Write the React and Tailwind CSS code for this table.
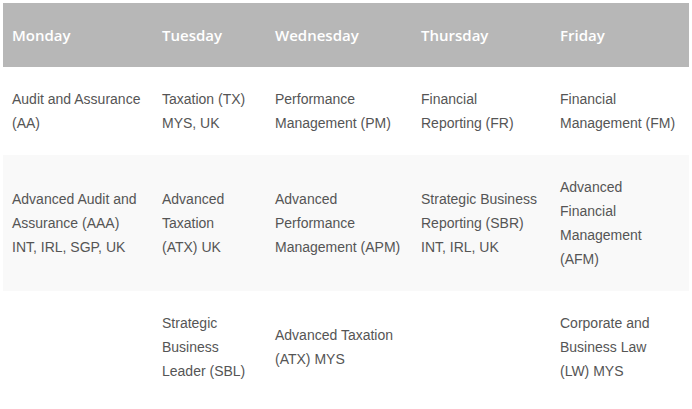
const days = ["Monday", "Tuesday", "Wednesday", "Thursday", "Friday"];
const widths = ["w-[150px]", "w-[113px]", "w-[146px]", "w-[139px]", "w-[138px]"];
// Tuesday wraps a little earlier in the original
const pads = ["pr-[11px]", "pr-[14px]", "pr-[11px]", "pr-[11px]", "pr-[11px]"];

const rows = [
  [
    "Audit and Assurance (AA)",
    "Taxation (TX) MYS, UK",
    "Performance Management (PM)",
    "Financial Reporting (FR)",
    "Financial Management (FM)",
  ],
  [
    "Advanced Audit and Assurance (AAA) INT, IRL, SGP, UK",
    "Advanced Taxation (ATX) UK",
    "Advanced Performance Management (APM)",
    "Strategic Business Reporting (SBR) INT, IRL, UK",
    "Advanced Financial Management (AFM)",
  ],
  [
    "",
    "Strategic Business Leader (SBL)",
    "Advanced Taxation (ATX) MYS",
    "",
    "Corporate and Business Law (LW) MYS",
  ],
];

const App = () => {
  return (
    <div className="p-[3px] bg-white">
      <table className="table-fixed border-collapse w-[686px]">
        <thead>
          <tr className="bg-[#b7b7b7]">
            {days.map((day, i) => (
              <th
                key={day}
                className={`${widths[i]} h-[64px] pl-[9px] pr-[11px] text-left align-middle text-white text-[15px] font-semibold font-['Open_Sans',sans-serif]`}
              >
                {day}
              </th>
            ))}
          </tr>
        </thead>
        <tbody>
          {rows.map((row, r) => (
            <tr key={r} className={r === 1 ? "bg-[#f9f9f9]" : "bg-white"}>
              {row.map((cell, i) => (
                <td
                  key={i}
                  className={`pl-[9px] ${pads[i]} py-[20px] align-middle text-[14px] leading-[24px] text-[#555] font-['Liberation_Sans',Arial,sans-serif]`}
                >
                  {cell}
                </td>
              ))}
            </tr>
          ))}
        </tbody>
      </table>
    </div>
  );
};

export default App;
